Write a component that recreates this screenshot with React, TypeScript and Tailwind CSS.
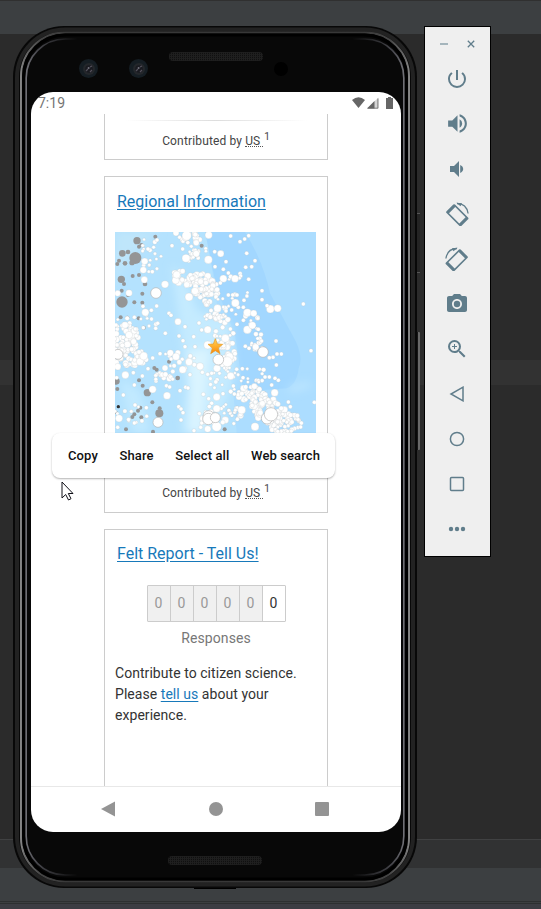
import React from "react";
import { MdPowerSettingsNew, MdVolumeUp, MdPhotoCamera, MdZoomIn } from "react-icons/md";

type Dot = [number, number, number];

function seeded(seed: number) {
  let s = seed;
  return () => {
    s = (s * 16807) % 2147483647;
    return s / 2147483647;
  };
}

// x, y, spread x, spread y, tilt, count, smallest radius, largest radius
const clusters: number[][] = [
  [270, 40, 32, 18, 0, 16, 6, 13],
  [295, 88, 40, 30, 0, 22, 5, 11],
  [275, 158, 58, 25, 6, 40, 8, 13],
  [318, 198, 38, 36, 0, 52, 7, 12],
  [345, 262, 42, 35, 10, 32, 5, 13],
  [370, 335, 30, 40, 0, 18, 5, 12],
  [380, 385, 24, 45, 0, 26, 7, 13],
  [75, 345, 40, 45, 0, 52, 7, 12],
  [90, 400, 55, 28, 0, 40, 7, 12],
  [110, 292, 65, 25, 0, 16, 5, 9],
  [145, 95, 40, 55, 0, 18, 5, 8],
  [235, 405, 70, 30, 0, 16, 5, 11],
  [195, 458, 35, 25, 0, 15, 6, 11],
  [395, 205, 50, 70, 0, 16, 5, 8],
  [470, 350, 22, 30, 0, 16, 5, 10],
  [455, 295, 30, 28, 0, 8, 5, 11],
  [460, 512, 48, 28, 10, 46, 6, 12],
  [510, 558, 60, 40, 18, 76, 7, 12],
  [555, 595, 50, 32, 0, 58, 6, 10],
  [395, 565, 32, 35, 0, 20, 5, 10],
  [340, 570, 45, 40, 0, 14, 6, 12],
  [375, 465, 50, 38, 0, 20, 5, 8],
  [465, 450, 40, 25, 0, 12, 5, 8],
  [90, 565, 60, 40, 0, 12, 5, 9],
];

const scatter: Dot[] = [
  [228, 24, 9], [260, 32, 14], [326, 30, 11], [392, 33, 6], [434, 42, 6], [420, 50, 6], [446, 32, 6], [216, 62, 6],
  [362, 86, 10], [344, 80, 6], [378, 110, 6], [440, 85, 6], [465, 107, 6], [455, 125, 6], [437, 127, 6], [345, 125, 6],
  [325, 104, 12], [258, 100, 12], [289, 86, 10], [248, 72, 6], [171, 45, 6], [144, 72, 6], [134, 109, 10], [130, 135, 10],
  [133, 164, 10], [157, 140, 6], [87, 204, 10], [195, 178, 11], [227, 166, 11], [230, 149, 11], [370, 161, 11], [405, 161, 11],
  [446, 163, 6], [370, 133, 6], [385, 144, 6], [361, 174, 6], [411, 210, 6], [398, 210, 6], [385, 210, 6], [486, 197, 6],
  [406, 234, 12], [432, 226, 6], [430, 247, 6], [486, 224, 6], [511, 252, 12], [533, 250, 11], [501, 242, 6], [610, 237, 6],
  [442, 263, 12], [461, 265, 10], [395, 255, 6], [378, 258, 6], [267, 216, 12], [285, 198, 11], [170, 243, 6], [136, 262, 11],
  [154, 256, 6], [129, 244, 6], [207, 265, 6], [213, 271, 6], [234, 290, 10], [173, 295, 6], [167, 310, 6], [130, 308, 6],
  [297, 294, 6], [323, 314, 11], [305, 315, 6], [255, 305, 6], [196, 325, 6], [237, 333, 6], [249, 347, 6], [281, 335, 6],
  [255, 365, 6], [285, 365, 6], [323, 360, 12], [376, 340, 12], [400, 325, 7], [391, 312, 6], [411, 298, 6], [442, 314, 12],
  [457, 301, 11], [475, 313, 6], [528, 348, 6], [633, 377, 6], [544, 387, 6], [531, 387, 6], [519, 397, 6], [508, 398, 6],
  [529, 420, 6], [436, 364, 6], [447, 370, 6], [467, 366, 10], [405, 386, 7], [211, 384, 10], [228, 395, 11], [267, 411, 11],
  [300, 424, 11], [248, 434, 11], [180, 386, 6], [158, 399, 6], [144, 431, 6], [127, 453, 6], [351, 430, 11], [382, 410, 15],
  [392, 453, 11], [410, 433, 6], [427, 431, 6], [335, 445, 6], [323, 448, 6], [307, 442, 6], [270, 449, 6], [257, 487, 6],
  [264, 489, 6], [240, 497, 6], [201, 512, 11], [209, 486, 6], [158, 493, 11], [310, 508, 6], [326, 521, 6], [350, 516, 11],
  [369, 506, 6], [400, 483, 6], [403, 507, 6], [429, 458, 6], [437, 486, 7], [463, 484, 9], [524, 503, 11], [535, 466, 6],
  [525, 460, 6], [508, 456, 6], [515, 480, 6], [643, 532, 6], [565, 531, 6], [571, 545, 6], [592, 572, 7], [602, 606, 6],
  [425, 555, 12], [350, 551, 11], [236, 545, 6], [243, 552, 6], [249, 563, 6], [243, 585, 6], [139, 548, 6], [57, 580, 11],
  [105, 540, 6], [103, 594, 6], [53, 607, 6], [305, 594, 6], [302, 607, 6], [282, 617, 6], [323, 612, 10], [350, 605, 14],
  [465, 605, 12], [412, 583, 6], [70, 510, 6], [103, 480, 6], [76, 450, 11], [53, 425, 10], [100, 443, 6], [120, 410, 11],
  [131, 393, 12], [117, 381, 7], [50, 458, 6], [53, 205, 9], [75, 300, 10], [87, 330, 11], [101, 350, 9], [48, 300, 6],
];

const grayDots: Dot[] = [
  [111, 47, 11], [67, 85, 10], [57, 107, 6], [106, 99, 18], [84, 81, 7], [117, 65, 6], [124, 60, 6], [52, 117, 6], [75, 115, 7],
  [96, 113, 8], [166, 35, 6], [305, 62, 6], [98, 153, 6], [117, 150, 6], [64, 163, 11], [72, 177, 6], [65, 197, 6], [66, 231, 17],
  [84, 210, 6], [103, 232, 6], [127, 206, 6], [127, 233, 6], [62, 277, 6], [82, 278, 6], [116, 280, 6], [131, 308, 6], [135, 177, 7],
  [207, 410, 6], [163, 429, 6], [170, 434, 6], [190, 447, 6], [233, 459, 7], [49, 469, 10], [52, 492, 6], [117, 466, 6],
  [128, 482, 6], [142, 503, 11], [157, 532, 6], [121, 548, 6], [114, 557, 6], [103, 568, 6], [97, 576, 6], [124, 577, 6],
  [178, 565, 12], [179, 550, 6], [48, 562, 5], [374, 613, 6], [159, 620, 6], [78, 613, 6], [345, 176, 6],
];

const largeDots: Dot[] = [
  [168, 204, 16], [489, 381, 16], [355, 404, 16], [54, 388, 15], [174, 592, 15], [326, 574, 17], [325, 582, 17],
  [346, 578, 15], [501, 580, 17], [513, 568, 20],
];

const rand = seeded(4127);
const clustered: Dot[] = clusters.flatMap(([x, y, sx, sy, tilt, n, r0, r1]) =>
  Array.from({ length: n }, (): Dot => {
    const a = rand() * Math.PI * 2;
    const d = Math.sqrt(rand());
    const dx = Math.cos(a) * d * sx;
    return [x + dx, y + Math.sin(a) * d * sy + (dx / sx) * tilt, r0 * 0.9 + rand() * rand() * (r1 - r0)];
  })
);

function QuakeMap() {
  return (
    <svg className="block h-[201px] w-[201px]" viewBox="45 21 603 603">
      <defs>
        <filter id="soft" x="-30%" y="-30%" width="160%" height="160%">
          <feGaussianBlur stdDeviation="12" />
        </filter>
        <linearGradient id="star" x1="0" y1="0" x2="0" y2="1">
          <stop offset="0" stopColor="#ffd35a" />
          <stop offset="0.5" stopColor="#ffb02e" />
          <stop offset="1" stopColor="#f7850c" />
        </linearGradient>
      </defs>
      <rect x="45" y="21" width="603" height="603" fill="#b4e2fe" />
      <path d="M320 21H648V624H410L400 500 360 300Z" fill="#acddff" />
      <path d="M315 21H435Q490 110 510 205 560 300 588 350 610 400 596 430 590 480 560 490L430 500 405 330 350 190Z" fill="#a2d7ff" />
      <g filter="url(#soft)">
        <path d="M215 120L245 150 295 260 390 290 405 440 350 624H245L262 480 240 300Z" fill="#c5ebff" />
        <path d="M262 380L330 370 320 470 305 624H265L270 500Z" fill="#daf4ff" />
        <path d="M45 21H180L120 60 60 140 45 200Z" fill="#bfe6fb" />
        <path d="M60 460L120 500 150 624H100Z" fill="#c2eaff" />
        <path d="M560 488L620 470 640 482 575 502Z" fill="#bfe7ff" />
      </g>
      <g fill="#949596">
        {grayDots.map(([x, y, r], i) => (
          <circle key={i} cx={x} cy={y} r={r} />
        ))}
      </g>
      <circle cx="55" cy="545" r="5" fill="#333" />
      <g fill="#fff" stroke="#b9c0c4" strokeOpacity="0.5" strokeWidth="1.5">
        {clustered.map(([x, y, r], i) => (
          <circle key={i} cx={x} cy={y} r={r} />
        ))}
        {scatter.map(([x, y, r], i) => (
          <circle key={i} cx={x} cy={y} r={r} />
        ))}
      </g>
      <g fill="#fff" stroke="#b5b5b5" strokeWidth="2">
        {largeDots.map(([x, y, r], i) => (
          <circle key={i} cx={x} cy={y} r={r} />
        ))}
      </g>
      <path d="M346 341L352 357 368 358 355 369 360 386 346 377 332 386 337 369 324 358 340 357Z" fill="url(#star)" stroke="#e79a25" strokeWidth="2" />
    </svg>
  );
}

function Bevel() {
  return (
    <svg className="absolute inset-0" width="404" height="862" viewBox="0 0 404 862" fill="none">
      <defs>
        <linearGradient id="edge" x1="0" x2="404" y1="0" y2="0" gradientUnits="userSpaceOnUse">
          <stop offset="0.019" stopColor="#858585" />
          <stop offset="0.03" stopColor="#6a6a6a" />
          <stop offset="0.07" stopColor="#454545" />
          <stop offset="0.14" stopColor="#383838" />
          <stop offset="0.86" stopColor="#383838" />
          <stop offset="0.93" stopColor="#454545" />
          <stop offset="0.97" stopColor="#6a6a6a" />
          <stop offset="0.981" stopColor="#858585" />
        </linearGradient>
        <linearGradient id="inner" x1="0" x2="404" y1="0" y2="0" gradientUnits="userSpaceOnUse">
          <stop offset="0.03" stopColor="#74747a" />
          <stop offset="0.06" stopColor="#48484e" />
          <stop offset="0.16" stopColor="#080808" />
          <stop offset="0.84" stopColor="#080808" />
          <stop offset="0.94" stopColor="#48484e" />
          <stop offset="0.97" stopColor="#74747a" />
        </linearGradient>
      </defs>
      <rect x="4" y="3.5" width="396" height="855" rx="48" stroke="#222" strokeWidth="4" />
      <rect x="8" y="6.500" width="388" height="849" rx="44" stroke="url(#edge)" strokeWidth="2" />
      <rect x="10.500" y="9" width="383" height="844" rx="42" stroke="#000" strokeWidth="3" />
      <rect x="13.200" y="13" width="377.600" height="836" rx="39" stroke="url(#inner)" strokeWidth="1.600" />
    </svg>
  );
}

function Lens() {
  return (
    <div className="flex size-[19px] items-center justify-center rounded-full bg-[#151d23]">
      <div className="flex size-[12px] items-center justify-center rounded-full bg-[#24272b]">
        <svg width="10" height="10" viewBox="0 0 10 10">
          <circle cx="5" cy="5" r="3.8" fill="#191a20" />
          <path d="M2 7l2-2M6 3l2-1M6 8l2-2" stroke="#53505c" strokeWidth="1.2" />
          <circle cx="4.6" cy="4" r="1" fill="#74727e" />
        </svg>
      </div>
    </div>
  );
}

function Speaker() {
  return (
    <div className="h-[9px] w-[94px] rounded-[4px] bg-[#101010] bg-[repeating-linear-gradient(90deg,#1f1f1f_0_1px,transparent_1px_2px),repeating-linear-gradient(0deg,#1d1d1d_0_1px,transparent_1px_2px)]" />
  );
}

function Contributed() {
  return (
    <div className="flex justify-center text-[12px] leading-[18px] whitespace-nowrap text-[#444]">
      <span className="tracking-[0.15px]">Contributed by&nbsp;</span>
      <span className="h-[15px] border-b border-dotted border-[#555]">US&nbsp;</span>
      <span className="-mt-[4px] ml-px text-[10px]">1</span>
    </div>
  );
}

function TurnDevice({ flip }: { flip?: boolean }) {
  return (
    <svg width="24" height="24" viewBox="0 0 24 24" className={flip ? "-scale-x-100" : ""}>
      <g transform="translate(12.300 13.300) rotate(45)">
        <path
          d="M-9.200-6H9.200Q10.400-6 10.400-4.800V4.800Q10.400 6 9.200 6H-9.200Q-10.400 6-10.400 4.800V-4.800Q-10.400-6-9.200-6ZM-7.300-4.400V4.400H7.300V-4.400Z"
          fill="#607d8b"
          fillRule="evenodd"
        />
      </g>
      <path d="M12 1.500Q21.500 1.500 23.100 11.500" fill="none" stroke="#607d8b" strokeWidth="1.300" />
      <path d="M11.300 .800L17 1.200 15.500 4.200Z" fill="#607d8b" />
    </svg>
  );
}

function Toolbar() {
  const icons = [
    <MdPowerSettingsNew size={24} />,
    <MdVolumeUp size={25} />,
    <svg width="24" height="24" viewBox="0 0 24 24" fill="currentColor">
      <path d="M5 9v6h4l5 5V4L9 9H5zM15.2 8v8c1.800-.8 3-2.200 3-4s-1.200-3.200-3-4z" />
    </svg>,
    <TurnDevice />,
    <TurnDevice flip />,
    <MdPhotoCamera size={24} />,
    <MdZoomIn size={24} />,
    <svg width="16" height="16" viewBox="0 0 16 16" fill="none" stroke="currentColor" strokeWidth="1.5">
      <path d="M14 1.200V14.800L2 8Z" />
    </svg>,
    <svg width="16" height="16" viewBox="0 0 16 16" fill="none" stroke="currentColor" strokeWidth="1.5">
      <circle cx="8" cy="8" r="6.600" />
    </svg>,
    <svg width="16" height="16" viewBox="0 0 16 16" fill="none" stroke="currentColor" strokeWidth="1.5">
      <rect x="1.500" y="1.500" width="13" height="13" rx="1" />
    </svg>,
    <svg width="18" height="6" viewBox="0 0 18 6" fill="currentColor">
      <circle cx="3" cy="3" r="2.200" />
      <circle cx="9" cy="3" r="2.200" />
      <circle cx="15" cy="3" r="2.200" />
    </svg>,
  ];
  return (
    <div className="flex h-[531px] w-[67px] flex-col border border-black bg-[#efefef] pr-px text-[#607d8b]">
      <div className="flex h-[29px] items-center justify-center gap-[19px] pt-[5px]">
        <span className="h-[2px] w-[8px] bg-[#a5b5bc]" />
        <svg width="8" height="8" viewBox="0 0 8 8" stroke="#607d8b" strokeWidth="1.3">
          <path d="M.8.8l6.400 6.400M7.200.8L.8 7.200" />
        </svg>
      </div>
      {icons.map((icon, i) => (
        <div key={i} className="flex h-[45px] shrink-0 items-center justify-center">
          {icon}
        </div>
      ))}
    </div>
  );
}

function Screen() {
  return (
    <div className="relative ml-[18px] flex h-[740px] w-[370px] flex-col self-start overflow-hidden rounded-[22px] bg-white">
      <div className="flex h-[22px] shrink-0 items-center justify-between px-[7px] text-[14px] text-[#757575]">
        <span>7:19</span>
        <svg width="43" height="14" viewBox="0 0 43 14" fill="#666">
          <path d="M1 4Q7.500-1.300 14 4L7.500 12Z" />
          <path d="M16 12.500L27.500 1.500V12.500Z" fill="#d6d6d6" />
          <path d="M16 12.500L23.500 5V12.500Z" />
          <path d="M26.900 2.500V12.200H16.800" fill="none" stroke="#666" strokeWidth=".8" />
          <path d="M35 2h2V1h3v1h2v11h-7Z" />
        </svg>
      </div>
      <div className="flex h-[672px] shrink-0 flex-col items-center gap-[16px] overflow-hidden">
        <div className="h-[46px] w-[224px] shrink-0 border border-t-0 border-[#ccc] pt-[6px]">
          <div className="mx-[20px] mb-[11px] h-px bg-gradient-to-r from-transparent via-[#ddd] to-transparent" />
          <Contributed />
        </div>
        <div className="flex h-[337px] w-[224px] shrink-0 flex-col border border-[#ccc] px-[10px] pt-[12px]">
          <div className="pl-[2px] text-[16px] leading-[25px] whitespace-nowrap text-[#1779ba] underline underline-offset-2">
            Regional Information
          </div>
          <div className="mt-[18px]">
            <QuakeMap />
          </div>
          <div className="mt-[51px]">
            <Contributed />
          </div>
        </div>
        <div className="flex h-[300px] w-[224px] shrink-0 flex-col border border-[#ccc] px-[10px] pt-[12px]">
          <div className="pl-[2px] text-[16px] leading-[24px] whitespace-nowrap text-[#1779ba] underline underline-offset-2">
            Felt Report - Tell Us!
          </div>
          <div className="mt-[19px] flex h-[37px] w-[139px] self-center rounded-[1px] border border-[#ccc] text-[14px] text-[#999]">
            {[0, 0, 0, 0, 0].map((n, i) => (
              <span key={i} className="flex w-[23px] items-center justify-center border-r border-[#ccc] bg-[#f0f0f0] pb-px">
                {n}
              </span>
            ))}
            <span className="flex flex-1 items-center justify-center pb-px text-[#333]">0</span>
          </div>
          <div className="mt-[6px] text-center text-[14px] leading-[21px] tracking-[0.1px] text-[#777]">Responses</div>
          <div className="mt-[14px] text-[14px] leading-[21px] tracking-[0.05px] whitespace-nowrap text-[#333]">
            Contribute to citizen science.
            <br />
            Please <span className="text-[#1779ba] underline underline-offset-2">tell us</span> about your
            <br />
            experience.
          </div>
        </div>
      </div>
      <div className="flex h-[46px] items-center justify-between border-t border-[#e8e8e8] pr-[72px] pb-px pl-[70px] text-[#949494]">
        <svg width="15" height="16" viewBox="0 0 15 16" fill="currentColor">
          <path d="M14 .5V15.500L0 8Z" />
        </svg>
        <span className="size-[14px] rounded-full bg-[#949494]" />
        <span className="size-[14px] rounded-[1px] bg-[#949494]" />
      </div>
      <div className="absolute top-[341px] left-[21px] flex h-[45px] w-[283px] items-center justify-between rounded-[8px] bg-white pr-[15px] pl-[16px] text-[13px] font-medium tracking-[0.1px] whitespace-nowrap text-[#111] shadow-[0_1px_2px_rgba(0,0,0,0.3)]">
        <span>Copy</span>
        <span>Share</span>
        <span>Select all</span>
        <span>Web search</span>
      </div>
      <svg className="absolute top-[389px] left-[30px]" width="13" height="20" viewBox="0 0 13 20">
        <path d="M1 1V17L4.700 13.500 7.500 19 10 17.700 7.300 12.500H12Z" fill="#fff" stroke="#101018" strokeWidth="1" />
      </svg>
    </div>
  );
}

export default function App() {
  return (
    <div className="relative h-[909px] w-[541px] overflow-hidden bg-[#2b2b2b] font-[Roboto,sans-serif]">
      <div className="absolute inset-0 flex flex-col">
        <div className="h-[34px] border-t border-[#303030] bg-[#3c3f41]" />
        <div className="h-[326px]" />
        <div className="h-[25px] bg-[#323232]" />
        <div className="h-[454px]" />
        <div className="h-[29px] border-t border-[#404142] bg-[#313233]" />
        <div className="h-[33px] bg-[#3c3f41]" />
        <div className="h-[3px] border-y border-[#2d3031] bg-[#3c3f41]" />
        <div className="flex-1 bg-[#3c3d43]" />
      </div>
      <div className="relative flex gap-[7px] pt-[26px] pl-[13px]">
        <div className="relative flex h-[862px] w-[404px] flex-col items-center rounded-[51px] bg-[#080808]">
          <Bevel />
          <div className="absolute top-[187px] -right-[3px] h-[60px] w-[3px] border-y border-[#555] bg-[#242424]" />
          <div className="absolute top-[306px] -right-[3px] h-[118px] w-[3px] rounded-r-[1px] border-r-2 border-[#686868] bg-[#161616]" />
          <div className="absolute -bottom-px left-[181px] h-px w-[42px] bg-black" />
          <div className="relative flex h-[66px] w-full shrink-0 pt-[33px] pl-[66px]">
            <Lens />
            <div className="ml-[31px]">
              <Lens />
            </div>
            <div className="-mt-[7px] ml-[21px]">
              <Speaker />
            </div>
            <div className="mt-[3px] ml-[11px] size-[14px] rounded-full bg-black" />
          </div>
          <Screen />
          <div className="relative pt-[24px]">
            <Speaker />
          </div>
        </div>
        <Toolbar />
      </div>
    </div>
  );
}
